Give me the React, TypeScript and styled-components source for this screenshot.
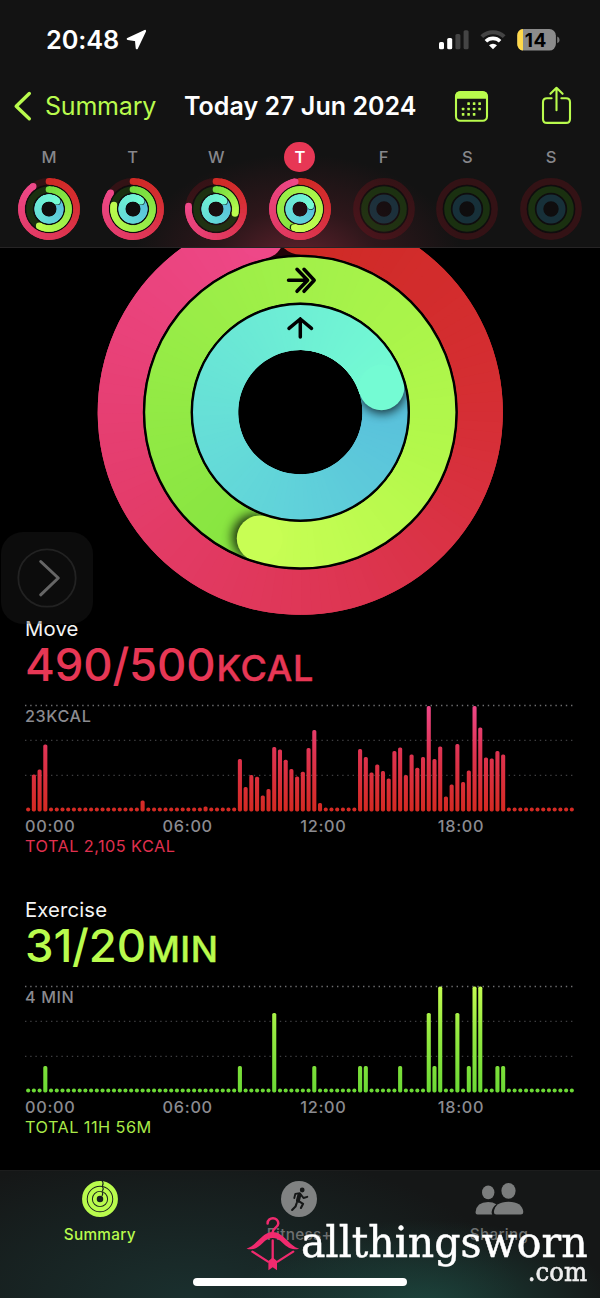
import React from "react";
import styled, { createGlobalStyle } from "styled-components";

const LIME = "#b9fb4d";
const PINK = "#e73755";
const GREY = "#8b8b90";

const GlobalStyle = createGlobalStyle`
  body { margin: 0; background: #000; }
  * { box-sizing: border-box; }
  svg { display: block; }
`;

const Screen = styled.div`
  position: relative;
  width: 600px;
  height: 1298px;
  display: flex;
  flex-direction: column;
  background: #000;
  color: #fff;
  overflow: hidden;
  font-family: Inter, "Liberation Sans", sans-serif;
`;

/* ---------- header ---------- */

const Header = styled.header`
  flex: none;
  height: 248px;
  border-bottom: 1px solid #262425;
  background:
    radial-gradient(ellipse 165px 110px at 298px 264px, rgba(140, 42, 60, 0.66), rgba(115, 32, 46, 0.28) 50%, transparent 100%),
    #131313;
`;

const StatusBar = styled.div`
  height: 80px;
  display: flex;
  align-items: center;
  justify-content: space-between;
  padding: 0 40px 0 46px;
`;

const StatusSide = styled.div<{ $gap: number }>`
  display: flex;
  align-items: center;
  gap: ${(p) => p.$gap}px;
`;

const Clock = styled.span`
  font-size: 25.3px;
  font-weight: 600;
  line-height: 30px;
  letter-spacing: -0.1px;
`;

const NavBar = styled.nav`
  height: 52px;
  display: grid;
  grid-template-columns: 184px 240px 78px 98px;
  align-items: center;
  white-space: nowrap;
`;

const BackLink = styled.a`
  display: flex;
  align-items: center;
  gap: 12px;
  padding-left: 13px;
  color: ${LIME};
  font-size: 25px;
  line-height: 30px;
  letter-spacing: -0.2px;
`;

const Title = styled.h1`
  margin: 0;
  font-size: 25px;
  font-weight: 600;
  line-height: 30px;
  letter-spacing: 0.03px;
`;

const NavIcon = styled.div<{ $left: number }>`
  padding-left: ${(p) => p.$left}px;
`;

const Week = styled.div`
  display: grid;
  grid-template-columns: repeat(7, 1fr);
  padding: 10px 7.2px 0;
`;

const Day = styled.div`
  display: flex;
  flex-direction: column;
  align-items: center;
  gap: 5px;
`;

const DayLetter = styled.span<{ $today: boolean }>`
  width: 31px;
  height: 30px;
  border-radius: 16px;
  text-align: center;
  font-size: 16.5px;
  line-height: 30px;
  font-weight: ${(p) => (p.$today ? 600 : 500)};
  color: ${(p) => (p.$today ? "#fff" : "#87878b")};
  background: ${(p) => (p.$today ? PINK : "transparent")};
`;

/* ---------- rings ---------- */

type Stop = [number, string];

const RED: Stop[] = [[0, "#cf2a25"], [0.25, "#d52e33"], [0.5, "#de3655"], [0.75, "#e53e70"], [1, "#ee4888"]];
const GREEN: Stop[] = [[0, "#74dc3e"], [0.5, "#97ec48"], [1, "#bcfc4e"]];
const GREEN_LAP: Stop[] = [[0, "#86e440"], [0.25, "#95eb46"], [0.5, "#a5f24a"], [0.75, "#b3f84b"], [1, "#c8fe54"]];
const BLUE: Stop[] = [[0, "#58bedb"], [0.3, "#60d1da"], [0.6, "#68e3d6"], [1, "#74fbd3"]];

function mix(stops: Stop[], t: number): string {
  let i = 0;
  while (i < stops.length - 2 && t > stops[i + 1][0]) i++;
  const [a, ca] = stops[i];
  const [b, cb] = stops[i + 1];
  const k = Math.min(1, Math.max(0, (t - a) / (b - a)));
  const part = (o: number) => {
    const x = parseInt(ca.slice(o, o + 2), 16);
    const y = parseInt(cb.slice(o, o + 2), 16);
    return Math.round(x + (y - x) * k);
  };
  return `rgb(${part(1)},${part(3)},${part(5)})`;
}

function polar(cx: number, cy: number, r: number, deg: number): [number, number] {
  const a = (deg * Math.PI) / 180;
  return [cx + r * Math.sin(a), cy - r * Math.cos(a)];
}

interface RingProps {
  id: string;
  cx: number;
  cy: number;
  r: number;
  width: number;
  sweep: number;
  stops: Stop[];
  track: string;
}

function Ring({ id, cx, cy, r, width, sweep, stops, track }: RingProps) {
  const lapped = sweep > 360;
  const from = lapped ? sweep - 360 : 0;
  const span = sweep - from;
  const step = r > 50 ? 3 : 10;
  const count = Math.ceil(span / step);
  // Each slice runs on under the next one, so no seam shows between them.
  const segs = Array.from({ length: sweep > 0 ? count : 0 }, (_, i) => {
    const a0 = from + (span * i) / count;
    const a1 = Math.min(from + (span * (i + 2)) / count, sweep);
    const [x0, y0] = polar(cx, cy, r, a0);
    const [x1, y1] = polar(cx, cy, r, a1);
    return (
      <path
        key={i}
        d={`M${x0} ${y0}A${r} ${r} 0 0 1 ${x1} ${y1}`}
        stroke={mix(stops, (i + 0.5) / count)}
        strokeWidth={width}
        fill="none"
      />
    );
  });
  const [ex, ey] = polar(cx, cy, r, sweep);
  const [sx, sy] = polar(cx, cy, r, sweep + (r > 50 ? 2 : 4));
  const hw = width / 2;
  return (
    <g>
      <circle cx={cx} cy={cy} r={r} fill="none" stroke={track} strokeWidth={width} />
      {lapped && <circle cx={cx} cy={cy} r={r} fill="none" stroke={mix(stops, 0)} strokeWidth={width - 0.6} />}
      {sweep > 0 && !lapped && <circle cx={cx} cy={cy - r} r={hw} fill={mix(stops, 0)} />}
      {segs}
      {lapped && (
        <>
          <defs>
            <clipPath id={`${id}-band`}>
              <path
                clipRule="evenodd"
                d={`M${cx - r - hw} ${cy}a${r + hw} ${r + hw} 0 1 0 ${2 * (r + hw)} 0a${r + hw} ${r + hw} 0 1 0 ${-2 * (r + hw)} 0zM${cx - r + hw} ${cy}a${r - hw} ${r - hw} 0 1 0 ${2 * (r - hw)} 0a${r - hw} ${r - hw} 0 1 0 ${-2 * (r - hw)} 0z`}
              />
            </clipPath>
            <filter id={`${id}-blur`} x="-50%" y="-50%" width="200%" height="200%">
              <feGaussianBlur stdDeviation={width / 9} />
            </filter>
          </defs>
          <g clipPath={`url(#${id}-band)`}>
            <circle cx={sx} cy={sy} r={hw} fill="#000" opacity={0.8} filter={`url(#${id}-blur)`} />
          </g>
          {segs.slice(-Math.ceil(count / 5))}
        </>
      )}
      {sweep > 0 && <circle cx={ex} cy={ey} r={hw} fill={mix(stops, 1)} />}
    </g>
  );
}

interface DayData {
  letter: string;
  move: number;
  exercise: number;
  stand: number;
}

const DAYS: DayData[] = [
  { letter: "M", move: 325, exercise: 210, stand: 405 },
  { letter: "T", move: 306, exercise: 282, stand: 405 },
  { letter: "W", move: 276, exercise: 103, stand: 405 },
  { letter: "T", move: 350, exercise: 557, stand: 433 },
  { letter: "F", move: 0, exercise: 0, stand: 0 },
  { letter: "S", move: 0, exercise: 0, stand: 0 },
  { letter: "S", move: 0, exercise: 0, stand: 0 },
];

function MiniRings({ day, index }: { day: DayData; index: number }) {
  return (
    <svg width="64" height="64" viewBox="-32 -32 64 64">
      <circle r="24.5" fill="rgba(10,6,8,0.4)" />
      <Ring id={`m${index}`} cx={0} cy={0} r={27.6} width={6.6} sweep={day.move} stops={RED} track="rgba(190,15,30,0.19)" />
      <Ring id={`e${index}`} cx={0} cy={0} r={19.5} width={6.6} sweep={day.exercise} stops={day.exercise > 360 ? GREEN_LAP : GREEN} track="rgba(50,120,20,0.33)" />
      <Ring id={`s${index}`} cx={0} cy={0} r={11.1} width={6.8} sweep={day.stand} stops={BLUE} track="rgba(40,110,135,0.36)" />
    </svg>
  );
}

const Scroll = styled.main`
  flex: none;
  height: 922px;
  overflow: hidden;
`;

const RingsWrap = styled.div`
  display: flex;
  justify-content: center;
  height: 367px;
`;

function ActivityRings() {
  return (
    <svg width="406" height="367" viewBox="97 248 406 367">
      <Ring id="move" cx={300.3} cy={412.2} r={180} width={45.2} sweep={347.5} stops={RED} track="#200308" />
      <Ring id="exercise" cx={300.3} cy={412.2} r={132.6} width={46} sweep={557.8} stops={GREEN_LAP} track="#000" />
      <Ring id="stand" cx={300.3} cy={412.2} r={84.9} width={45.6} sweep={433} stops={BLUE} track="#000" />
      <g fill="none" stroke="#000" strokeWidth="2.4">
        <circle cx="300.3" cy="412.2" r="156.3" />
        <circle cx="300.3" cy="412.2" r="108.5" />
      </g>
      <g fill="none" stroke="#000" strokeWidth="3.5" strokeLinecap="round" strokeLinejoin="round">
        <path d="M288.5 280.2H307M297 269.3L307.6 280.2L297 291.3M304 269.3L314.2 280.2L304 291.3" />
        <path d="M300.3 337V319M289 328.4L300.3 319L311.5 328.4" />
      </g>
    </svg>
  );
}

/* ---------- charts ---------- */

const Panel = styled.section<{ $top: number }>`
  padding: ${(p) => p.$top}px 25px 0;
  white-space: nowrap;
`;

const PanelTitle = styled.h2`
  margin: 0;
  height: 24px;
  font-size: 20.3px;
  font-weight: 400;
  line-height: 24px;
  letter-spacing: 0.15px;
  color: #f4f4f4;
`;

const Amount = styled.div<{ $color: string }>`
  height: 47px;
  display: flex;
  align-items: baseline;
  color: ${(p) => p.$color};
  font-size: 45.5px;
  font-weight: 500;
  line-height: 47px;
  letter-spacing: -0.15px;
`;

const Unit = styled.span`
  padding-left: 1px;
  font-size: 36px;
  font-weight: 500;
  letter-spacing: 0.6px;
  -webkit-text-stroke: 0.4px currentColor;
`;

const ChartSvg = styled.svg`
  margin-top: 12px;
  overflow: visible;
`;

const AxisRow = styled.div`
  display: grid;
  grid-template-columns: repeat(4, 137.6px);
  height: 23px;
  color: ${GREY};
  font-size: 16.3px;
  font-weight: 500;
  line-height: 24px;
  letter-spacing: 0.7px;
`;

const Total = styled.div<{ $color: string }>`
  height: 18px;
  font-size: 16.3px;
  line-height: 18px;
  letter-spacing: 0.45px;
  color: ${(p) => p.$color};
`;

const MOVE_BARS: Record<number, number> = {
  1: 37, 2: 42, 3: 67, 20: 11, 31: 5, 37: 52.3, 38: 24.3, 39: 36.3, 40: 34.7, 41: 16, 42: 22.3, 43: 64.3,
  44: 62, 45: 51.7, 46: 42.3, 47: 35, 48: 39.7, 49: 63.3, 50: 81.3, 51: 8.3, 58: 62.3, 59: 54.3, 60: 39,
  61: 47, 62: 40.3, 63: 33, 64: 60.3, 65: 64, 66: 36.3, 67: 57, 68: 43.7, 69: 54.3, 70: 105.3, 71: 52.3,
  72: 65, 73: 15, 74: 27, 75: 67.3, 76: 29.3, 77: 41, 78: 105.3, 79: 84, 80: 54, 81: 53, 82: 60.3, 83: 57,
};

const EXERCISE_BARS: Record<number, number> = {
  3: 26.3, 37: 26.3, 43: 79.5, 50: 26.3, 58: 26.3, 59: 26.3, 65: 26.3, 70: 79.5, 71: 26.3, 72: 105.8,
  75: 79.5, 77: 26.3, 78: 105.8, 79: 105.8, 82: 26.3, 83: 26.3,
};

interface ChartProps {
  id: string;
  bars: Record<number, number>;
  label: string;
  stops: [string, string, string];
}

function Chart({ id, bars, label, stops }: ChartProps) {
  return (
    <ChartSvg width="550" height="114" viewBox="0 0 550 114">
      <defs>
        <linearGradient id={id} gradientUnits="userSpaceOnUse" x1="0" x2="0" y1="111.4" y2="6">
          <stop offset="0" stopColor={stops[0]} />
          <stop offset="0.55" stopColor={stops[1]} />
          <stop offset="1" stopColor={stops[2]} />
        </linearGradient>
      </defs>
      {[5.5, 40.4, 75.3].map((y, i) => (
        <line key={y} x1="0" x2="550" y1={y} y2={y} stroke={i ? "#3e3e40" : "#6e6e70"} strokeWidth="1.3" strokeDasharray="1.4 3.8" />
      ))}
      <text x="0" y="22.3" fontSize="16.2" fontWeight="500" letterSpacing="0.6" fill={GREY}>
        {label}
      </text>
      {Array.from({ length: 96 }, (_, i) => {
        const h = bars[i] ?? 4;
        return <rect key={i} x={1.1 + i * 5.723} y={111.4 - h} width={4.1} height={h} rx={h > 4 ? 1.6 : 2} fill={`url(#${id})`} />;
      })}
    </ChartSvg>
  );
}

function Axis() {
  return (
    <AxisRow>
      <span>00:00</span>
      <span>06:00</span>
      <span>12:00</span>
      <span>18:00</span>
    </AxisRow>
  );
}

/* ---------- tab bar ---------- */

const TabBar = styled.footer`
  flex: none;
  height: 128px;
  display: flex;
  align-items: flex-start;
  border-top: 1px solid #1c1d1d;
  background:
    radial-gradient(ellipse 190px 85px at 425px 134px, rgba(30, 80, 70, 0.75), transparent),
    radial-gradient(ellipse 330px 150px at 190px 128px, rgba(28, 56, 54, 0.75), transparent),
    #151717;
`;

const Tab = styled.a<{ $active?: boolean }>`
  width: 199.6px;
  padding-top: 9px;
  display: flex;
  flex-direction: column;
  align-items: center;
  gap: 7px;
  font-size: 15.3px;
  font-weight: 500;
  line-height: 20px;
  letter-spacing: 0.3px;
  color: ${(p) => (p.$active ? LIME : "#6d7070")};
`;

const HomeIndicator = styled.div`
  position: absolute;
  left: 193px;
  top: 1278px;
  width: 214px;
  height: 8px;
  border-radius: 4px;
  background: #fff;
`;

const FloatingButton = styled.div`
  position: absolute;
  left: 1px;
  top: 532px;
  width: 92px;
  height: 92px;
  border-radius: 22px;
  display: flex;
  align-items: center;
  justify-content: center;
  background: rgba(38, 38, 38, 0.32);
`;

const Brand = styled.div`
  position: absolute;
  left: 246px;
  top: 1215px;
  width: 345px;
  height: 75px;
  font-family: "DejaVu Serif", serif;
  white-space: nowrap;
`;

const BrandName = styled.div`
  position: absolute;
  left: 55px;
  top: 1px;
  font-size: 42px;
  line-height: 54px;
  -webkit-text-stroke: 0.5px #fff;
  transform-origin: 0 0;
  transform: scaleX(0.978);
`;

const BrandSuffix = styled.div`
  position: absolute;
  right: 4px;
  top: 41px;
  font-size: 26px;
  line-height: 32px;
  color: #eee;
  -webkit-text-stroke: 0.6px #eee;
  transform-origin: 100% 0;
  transform: scaleX(0.94);
`;

export default function App() {
  return (
    <Screen>
      <GlobalStyle />
      <Header>
        <StatusBar>
          <StatusSide $gap={7}>
            <Clock>20:48</Clock>
            <svg width="22" height="22" viewBox="0 0 22 22">
              <path d="M19 2L10.8 19.2L10 11.2L1.8 10Z" fill="#fff" stroke="#fff" strokeWidth="2.2" strokeLinejoin="round" />
            </svg>
          </StatusSide>
          <StatusSide $gap={0}>
            <svg width="121" height="24" viewBox="439 28 121 24">
              <rect x="439" y="42" width="5" height="7.3" rx="1.6" fill="#fff" />
              <rect x="447.2" y="38" width="5" height="11.3" rx="1.6" fill="#fff" />
              <rect x="455.4" y="34" width="5" height="15.3" rx="1.6" fill="#444" />
              <rect x="463.6" y="30.2" width="5" height="19.1" rx="1.6" fill="#444" />
              <g fill="none">
                <path d="M481.8 36.6A16.3 16.3 0 0 1 504.2 36.6" stroke="#444" strokeWidth="4" />
                <path d="M485.9 41.3A10.2 10.2 0 0 1 500.1 41.3" stroke="#fff" strokeWidth="3.6" />
              </g>
              <path d="M493 49.3L489 45.3A5.8 5.8 0 0 1 497 45.3Z" fill="#fff" />
              <rect x="517.3" y="29" width="38.6" height="21.6" rx="6.5" fill="#8b8b8b" />
              <path d="M523 29V50.6A6 6 0 0 1 517.3 44.1V35.5A6 6 0 0 1 523 29Z" fill="#ffd84a" />
              <path d="M557.2 36.6Q559.6 37.6 559.6 39.9T557.2 43.2Z" fill="#777" />
              <text x="524.8" y="46.8" fontSize="19" fontWeight="700" letterSpacing="0.4" fill="#000">14</text>
            </svg>
          </StatusSide>
        </StatusBar>
        <NavBar>
          <BackLink>
            <svg width="20" height="32" viewBox="0 0 20 32">
              <path d="M16.3 3.5L3.2 16.2L16.3 28.8" fill="none" stroke={LIME} strokeWidth="3.4" strokeLinecap="round" strokeLinejoin="round" />
            </svg>
            Summary
          </BackLink>
          <Title>Today 27 Jun 2024</Title>
          <NavIcon $left={30}>
            <svg width="35" height="32" viewBox="454 90 35 32">
              <rect x="456" y="92.1" width="31" height="28.6" rx="4.2" fill="none" stroke={LIME} strokeWidth="2.1" />
              <path d="M455.5 98.8V96Q455.5 91.6 460 91.6H483Q487.4 91.6 487.4 96V98.8Z" fill={LIME} />
              <g fill={LIME}>
                {[
                  [468.6, 103.6], [474.1, 103.6], [479.6, 103.6],
                  [463.1, 109], [468.6, 109], [474.1, 109], [479.6, 109],
                  [463.1, 114.4], [468.6, 114.4], [474.1, 114.4],
                ].map(([x, y]) => (
                  <rect key={`${x}-${y}`} x={x - 1.3} y={y - 1.3} width="2.6" height="2.6" rx="0.5" />
                ))}
              </g>
            </svg>
          </NavIcon>
          <NavIcon $left={38}>
            <svg width="34" height="40" viewBox="540 86 34 40">
              <g fill="none" stroke={LIME} strokeWidth="2.1" strokeLinecap="round" strokeLinejoin="round">
                <path d="M551.6 98.2H547Q543 98.2 543 102.2V118.9Q543 122.9 547 122.9H566Q570 122.9 570 118.9V102.2Q570 98.2 566 98.2H561.4" />
                <path d="M556.5 110.2V88.2M550.4 93.8L556.5 87.8L562.6 93.8" />
              </g>
            </svg>
          </NavIcon>
        </NavBar>
        <Week>
          {DAYS.map((d, i) => (
            <Day key={i}>
              <DayLetter $today={i === 3}>{d.letter}</DayLetter>
              <MiniRings day={d} index={i} />
            </Day>
          ))}
        </Week>
      </Header>

      <Scroll>
        <RingsWrap>
          <ActivityRings />
        </RingsWrap>
        <Panel $top={2}>
          <PanelTitle>Move</PanelTitle>
          <Amount $color={PINK}>
            490/500<Unit>KCAL</Unit>
          </Amount>
          <Chart id="bars-move" bars={MOVE_BARS} label="23KCAL" stops={["#d42a22", "#de3350", "#ee4788"]} />
          <Axis />
          <Total $color="#e1304f">TOTAL 2,105 KCAL</Total>
        </Panel>
        <Panel $top={43.4}>
          <PanelTitle>Exercise</PanelTitle>
          <Amount $color={LIME}>
            31/20<Unit>MIN</Unit>
          </Amount>
          <Chart id="bars-exercise" bars={EXERCISE_BARS} label="4 MIN" stops={["#6bd935", "#93e940", "#c3fc50"]} />
          <Axis />
          <Total $color="#a9e948">TOTAL 11H 56M</Total>
        </Panel>
      </Scroll>

      <TabBar>
        <Tab $active>
          <svg width="38" height="38" viewBox="-19 -19 38 38">
            <g fill="none" stroke={LIME}>
              <circle r="15.6" strokeWidth="4.7" />
              <circle r="10.2" strokeWidth="4.2" />
              <circle r="5.2" strokeWidth="3.9" />
            </g>
            <path d="M2 -18.5Q4 -16 2.4 -13M2.4 -12.6Q4 -10.4 2.4 -8M2 -7.4Q3.4 -5.4 2 -3" fill="none" stroke="#14201f" strokeWidth="1.1" />
          </svg>
          Summary
        </Tab>
        <Tab>
          <svg width="38" height="38" viewBox="280.3 1180 38 38">
            <circle cx="299.3" cy="1199" r="18" fill="#808282" />
            <circle cx="302.5" cy="1190" r="2.4" fill="#151717" />
            <g fill="none" stroke="#151717" strokeWidth="1.9" strokeLinecap="round" strokeLinejoin="round">
              <path d="M294.6 1198L295.6 1193.9L300.2 1193.3L303.8 1198L307.6 1196.8" />
              <path d="M299.6 1195.3L298.2 1200.8" strokeWidth="4" />
              <path d="M299 1201.2L303.4 1203.8L301.2 1208" strokeWidth="2.1" />
              <path d="M297 1203L295.8 1206.6L292.4 1210" strokeWidth="2.1" />
            </g>
          </svg>
          Fitness+
        </Tab>
        <Tab>
          <svg width="50" height="38" viewBox="474.5 1180 50 38">
            <g fill="#7b7d7d">
              <ellipse cx="488.7" cy="1192.4" rx="6.2" ry="6.8" />
              <ellipse cx="509" cy="1190.8" rx="7.1" ry="7.9" />
              <path d="M494.4 1212Q495.5 1201.8 509 1201.8T523.8 1212Q523.8 1214.5 521.4 1214.5H496.8Q494.4 1214.5 494.4 1212Z" />
              <path d="M476 1212.2Q477 1202 488.6 1202Q493.4 1202 496.8 1204.2Q492.4 1207.6 492.1 1212.2Q492.1 1213.6 492.8 1214.5H478Q476 1214.5 476 1212.2Z" />
            </g>
          </svg>
          Sharing
        </Tab>
      </TabBar>

      <HomeIndicator />
      <FloatingButton>
        <svg width="62" height="62" viewBox="-31 -31 62 62">
          <circle r="28.7" fill="none" stroke="#222" strokeWidth="1.8" />
          <path d="M-6.3 -16.5L11.3 0L-6.3 16.8" fill="none" stroke="#666" strokeWidth="3" strokeLinecap="round" strokeLinejoin="round" />
        </svg>
      </FloatingButton>
      <Brand>
        <svg width="55" height="56" viewBox="246 1215 55 56">
          <g fill="none" stroke="#f02a6e" strokeLinecap="round">
            <path d="M267.6 1223.4C267.6 1216.5 278.4 1216.6 278.3 1223.6C278.3 1228 272.8 1227.4 272.7 1232" strokeWidth="2.5" />
            <path d="M272.7 1240.5V1260M252.4 1251.6L268 1261.6M293.2 1251.6L277.6 1261.6" strokeWidth="2.3" />
          </g>
          <path d="M246.5 1248.8C257 1245.5 262 1232 272.7 1232S288.6 1245.5 299.2 1248.8C294 1249.9 290.5 1249.2 287 1246.6C282 1242.8 279 1238 272.7 1238S263.6 1242.8 258.6 1246.6C255 1249.2 251.6 1249.9 246.5 1248.8Z" fill="#f02a6e" />
          <path d="M268.4 1261L272.7 1257.4L277 1261V1270.2L272.7 1267.2L268.4 1270.2Z" fill="#f02a6e" />
        </svg>
        <BrandName>allthingsworn</BrandName>
        <BrandSuffix>.com</BrandSuffix>
      </Brand>
    </Screen>
  );
}
